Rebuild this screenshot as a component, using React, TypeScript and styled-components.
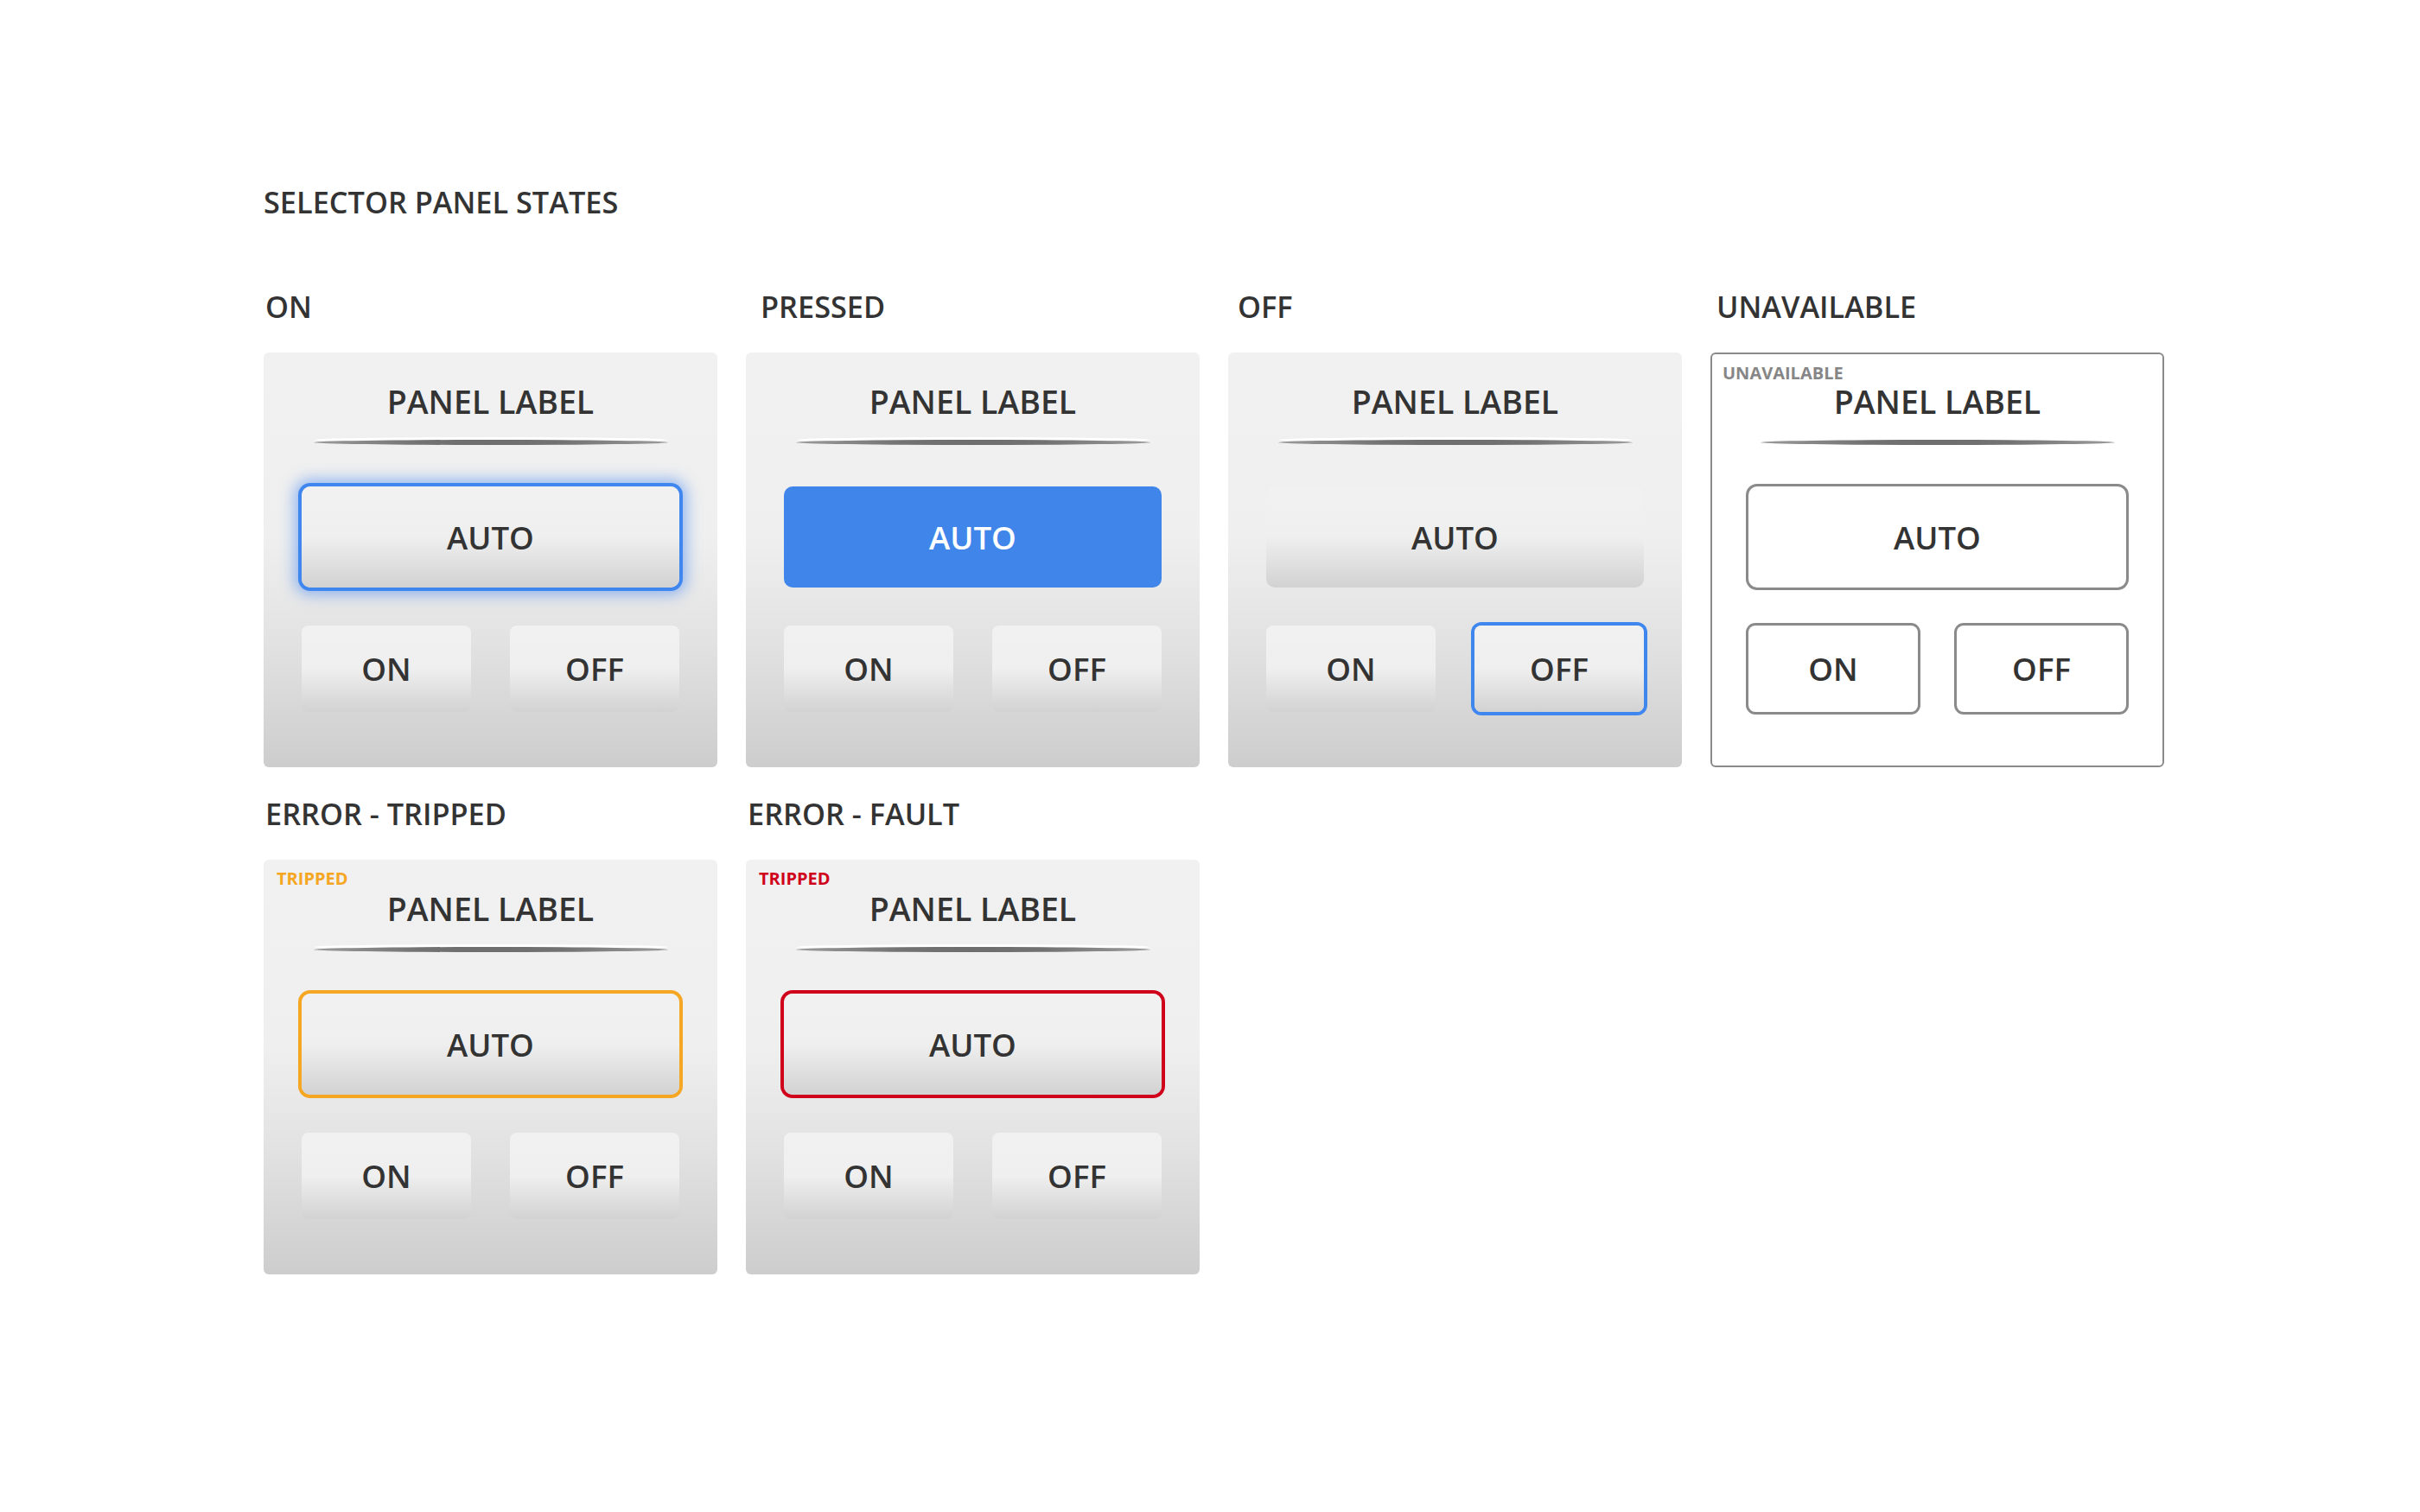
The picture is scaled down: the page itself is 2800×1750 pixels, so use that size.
import React from "react";
import styled, { createGlobalStyle, css } from "styled-components";

const GlobalStyle = createGlobalStyle`
  html, body { margin: 0; padding: 0; background: #ffffff; }
  body { font-family: "Open Sans", "Liberation Sans", sans-serif; color: #333333; }
  * { box-sizing: border-box; }
`;

const Page = styled.div`
  padding: 212px 0 0 305px;
  min-height: 1750px;
`;

const Title = styled.h1`
  margin: 0 0 77px 0;
  font-size: 34.3px;
  line-height: 44px;
  font-weight: 600;
  color: #333;
`;

const Grid = styled.div`
  display: grid;
  grid-template-columns: repeat(4, 525px);
  column-gap: 33px;
  row-gap: 32px;
  align-items: start;
`;

const Cell = styled.div`
  display: flex;
  flex-direction: column;
`;

const StateLabel = styled.div<{ $indent: number }>`
  font-size: 34.3px;
  line-height: 44px;
  font-weight: 600;
  color: #333;
  margin: 0 0 31px ${(p) => p.$indent}px;
`;

type Variant = "default" | "unavailable";

const Panel = styled.div<{ $variant: Variant }>`
  position: relative;
  width: 525px;
  height: 480px;
  border-radius: 6px;
  padding: 35px 44px 64px;
  display: flex;
  flex-direction: column;
  ${(p) =>
    p.$variant === "unavailable"
      ? css`
          background: #ffffff;
          border: 2px solid #8a8a8a;
          padding: 33px 42px 62px;
        `
      : css`
          background: linear-gradient(180deg, #f1f1f1 0%, #efefef 45%, #e2e2e2 70%, #cdcdcd 100%);
        `}
`;

const Tag = styled.span<{ $color: string; $inset: number }>`
  position: absolute;
  left: ${(p) => p.$inset}px;
  top: 10px;
  font-size: 20px;
  line-height: 24px;
  font-weight: 700;
  color: ${(p) => p.$color};
`;

const PanelLabel = styled.div`
  text-align: center;
  font-size: 37.5px;
  line-height: 44px;
  font-weight: 600;
  color: #333;
`;

const Divider = styled.div`
  width: 410px;
  height: 6px;
  margin: 22px auto 0;
  border-radius: 50%;
  background: linear-gradient(90deg, #9c9c9c 0%, #727272 30%, #6e6e6e 50%, #727272 70%, #9c9c9c 100%);
  box-shadow: 0 -3px 0 #ffffff;
`;

type BtnState = "normal" | "glow" | "pressed" | "selected" | "tripped" | "fault" | "unavailable";

const ringColors: Record<string, string> = {
  glow: "#3f86ee",
  selected: "#3f86ee",
  tripped: "#f5a623",
  fault: "#d0021b",
  unavailable: "#8a8a8a",
};

const SwitchButton = styled.div<{ $state: BtnState; $big?: boolean }>`
  display: flex;
  align-items: center;
  justify-content: center;
  height: ${(p) => (p.$big ? 117 : 100)}px;
  border-radius: ${(p) => (p.$big ? 10 : 8)}px;
  font-size: 36.6px;
  font-weight: 600;
  color: #333;
  background: linear-gradient(180deg, #f1f1f1 0%, #efefef 50%, #e6e6e6 65%, #d2d2d2 100%);
  ${(p) => {
    switch (p.$state) {
      case "glow":
        return css`
          box-shadow: 0 0 0 4px ${ringColors.glow}, 0 0 16px 9px rgba(66, 133, 244, 0.5);
        `;
      case "pressed":
        return css`
          background: #4086ea;
          color: #ffffff;
        `;
      case "selected":
      case "tripped":
      case "fault":
        return css`
          box-shadow: 0 0 0 4px ${ringColors[p.$state]};
        `;
      case "unavailable":
        return css`
          background: #ffffff;
          box-shadow: 0 0 0 3px ${ringColors.unavailable};
        `;
      default:
        return css``;
    }
  }}
`;

const AutoWrap = styled.div`
  margin-top: 48px;
`;

const SwitchRow = styled.div`
  margin-top: 44px;
  display: grid;
  grid-template-columns: 196px 196px;
  column-gap: 45px;
`;

type PanelSpec = {
  title: string;
  indent: number;
  variant: Variant;
  tag?: { text: string; color: string };
  auto: BtnState;
  on: BtnState;
  off: BtnState;
};

const panels: PanelSpec[] = [
  { title: "ON", indent: 2, variant: "default", auto: "glow", on: "normal", off: "normal" },
  { title: "PRESSED", indent: 17, variant: "default", auto: "pressed", on: "normal", off: "normal" },
  { title: "OFF", indent: 11, variant: "default", auto: "normal", on: "normal", off: "selected" },
  {
    title: "UNAVAILABLE",
    indent: 7,
    variant: "unavailable",
    tag: { text: "UNAVAILABLE", color: "#868686" },
    auto: "unavailable",
    on: "unavailable",
    off: "unavailable",
  },
  {
    title: "ERROR - TRIPPED",
    indent: 2,
    variant: "default",
    tag: { text: "TRIPPED", color: "#f5a623" },
    auto: "tripped",
    on: "normal",
    off: "normal",
  },
  {
    title: "ERROR - FAULT",
    indent: 2,
    variant: "default",
    tag: { text: "TRIPPED", color: "#d0021b" },
    auto: "fault",
    on: "normal",
    off: "normal",
  },
];

function SelectorPanel({ spec }: { spec: PanelSpec }) {
  return (
    <Cell>
      <StateLabel $indent={spec.indent}>{spec.title}</StateLabel>
      <Panel $variant={spec.variant}>
        {spec.tag && (
          <Tag $color={spec.tag.color} $inset={spec.variant === "unavailable" ? 12 : 15}>
            {spec.tag.text}
          </Tag>
        )}
        <PanelLabel>PANEL LABEL</PanelLabel>
        <Divider />
        <AutoWrap>
          <SwitchButton $big $state={spec.auto}>AUTO</SwitchButton>
        </AutoWrap>
        <SwitchRow>
          <SwitchButton $state={spec.on}>ON</SwitchButton>
          <SwitchButton $state={spec.off}>OFF</SwitchButton>
        </SwitchRow>
      </Panel>
    </Cell>
  );
}

export default function App() {
  return (
    <>
      <GlobalStyle />
      <Page>
        <Title>SELECTOR PANEL STATES</Title>
        <Grid>
          {panels.map((p) => (
            <SelectorPanel key={p.title} spec={p} />
          ))}
        </Grid>
      </Page>
    </>
  );
}
